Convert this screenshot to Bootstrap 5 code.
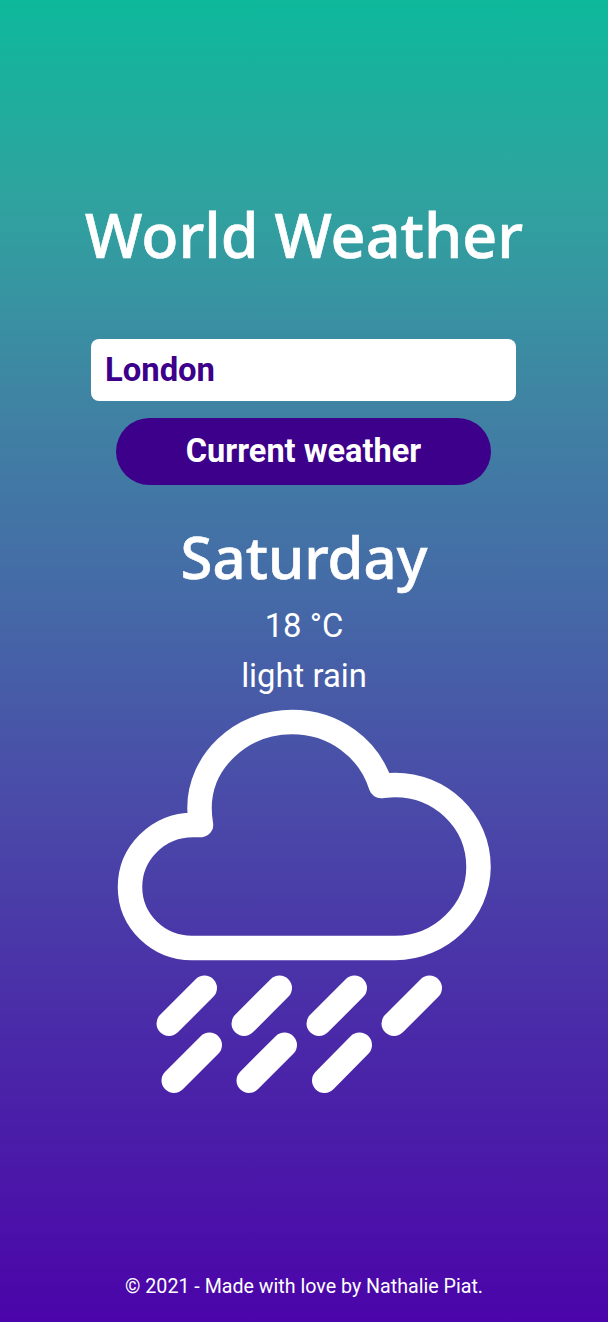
<!DOCTYPE html>
<html lang="en">
<head>
    <meta charset="UTF-8">
    <meta name="viewport" content="width=device-width, initial-scale=1.0">
    <title>World Weather</title>
    <link href="https://cdn.jsdelivr.net/npm/bootstrap@5.3.0/dist/css/bootstrap.min.css" rel="stylesheet">
    <style>
        body {
            background: linear-gradient(180deg, #0db89b 0%, #2fa39f 15%, #3f84a3 30%, #4568a7 46%, #4a48a8 62%, #4a2aa8 78%, #4b04a9 100%);
            color: #fff;
            font-family: Roboto, sans-serif;
            min-height: 1322px;
        }

        .app-title {
            font-family: "Noto Sans", sans-serif;
            font-size: 61px;
            font-weight: 500;
            line-height: 78px;
            margin: 196px 0 0;
            -webkit-text-stroke: 0.6px #fff;
        }

        .city-form {
            padding-right: 1px;
        }

        .city-input {
            width: 425px;
            height: 62px;
            margin-top: 65px;
            padding: 0 14px 1px;
            border: 0;
            border-radius: 8px;
            color: #3d008a;
            font-size: 32.800px;
            font-weight: 700;
        }

        .city-input:focus {
            color: #3d008a;
            box-shadow: none;
        }

        .search-btn,
        .search-btn:hover {
            width: 375px;
            height: 67px;
            margin-top: 17px;
            border: 0;
            border-radius: 34px;
            background-color: #3d008a;
            color: #fff;
            font-size: 32.500px;
            font-weight: 700;
            line-height: 1;
        }

        .day-name {
            font-family: "Noto Sans", sans-serif;
            font-size: 58px;
            font-weight: 500;
            line-height: 70px;
            margin: 37px 0 0;
            -webkit-text-stroke: 0.6px #fff;
        }

        .weather-line {
            font-size: 32.800px;
            line-height: 50px;
            margin: 0;
        }

        .weather-line-first {
            margin-top: 9px;
        }

        .weather-icon {
            display: block;
            width: 380px;
            height: 390px;
            margin-top: 4px;
        }

        .page-foot {
            font-size: 19.650px;
            line-height: 27px;
            padding-bottom: 22px;
        }
    </style>
</head>
<body class="d-flex flex-column align-items-center text-center">

    <h1 class="app-title">World Weather</h1>

    <form class="city-form d-flex flex-column align-items-center">
        <input type="text" class="form-control city-input" value="London">
        <button type="button" class="btn search-btn">Current weather</button>
    </form>

    <h2 class="day-name">Saturday</h2>
    <p class="weather-line weather-line-first">18 °C</p>
    <p class="weather-line">light rain</p>

    <!-- viewBox uses page x / y so the points read straight off the screenshot -->
    <svg class="weather-icon" viewBox="114 705 380 390" fill="none" stroke="#fff" stroke-linecap="round" stroke-linejoin="round" aria-hidden="true">
        <path stroke-width="24.5" d="M192 948H395C441 948 478.5 911 478.5 867C478.5 820 440 785 395 785C390 785 386 785.500 381 786C369 748 334 722 292 722C240 722 199.500 762 199.500 808C199.500 813 200 819 201 825C198 825 196 825 193 825C158 825 130 853 130 887C130 921 158 948 192 948Z"/>
        <g stroke-width="25">
            <path d="M204.500 988L169 1023.500"/>
            <path d="M279.500 988L244 1023.500"/>
            <path d="M354.500 988L319 1023.500"/>
            <path d="M429.500 988L394 1023.500"/>
            <path d="M209.500 1045L174 1080.500"/>
            <path d="M284.500 1045L249 1080.500"/>
            <path d="M359.500 1045L324.500 1080.500"/>
        </g>
    </svg>

    <footer class="page-foot mt-auto">© 2021 - Made with love by Nathalie Piat.</footer>

</body>
</html>
